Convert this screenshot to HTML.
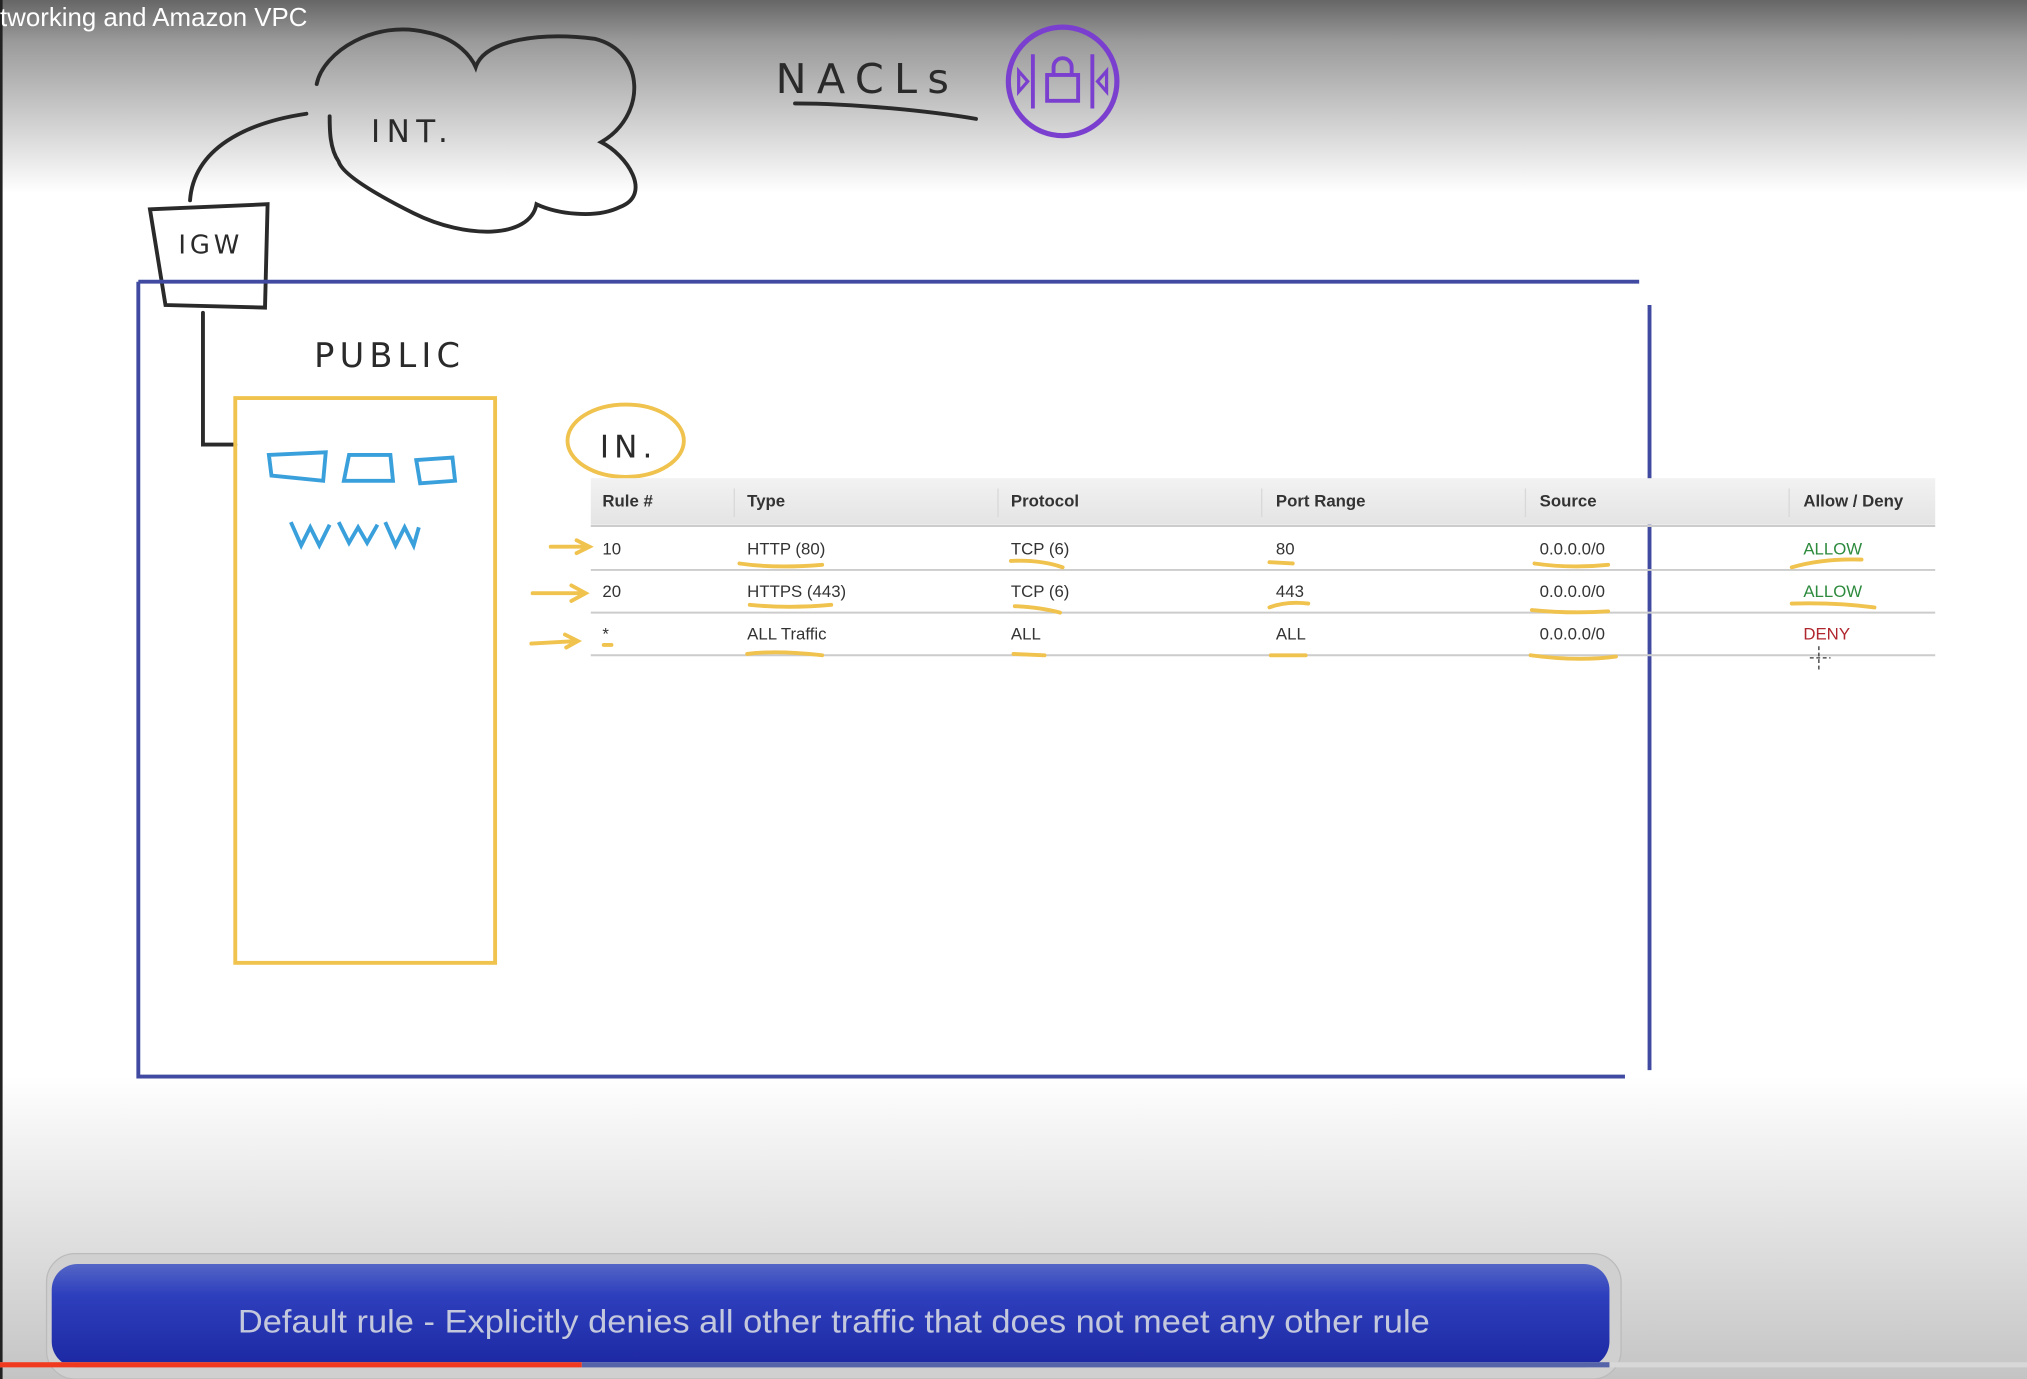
<!DOCTYPE html>
<html><head><meta charset="utf-8"><style>
html,body{margin:0;padding:0;width:2027px;height:1379px;overflow:hidden;background:#fff}
svg{display:block}
</style></head><body>
<svg width="2027" height="1379" viewBox="0 0 1568 1067" preserveAspectRatio="none" xmlns="http://www.w3.org/2000/svg">
<defs>
<linearGradient id="bg" x1="0" y1="0" x2="0" y2="1">
<stop offset="0" stop-color="#666"/>
<stop offset="0.03" stop-color="#9a9a9a"/>
<stop offset="0.14" stop-color="#fff"/>
<stop offset="0.78" stop-color="#fff"/>
<stop offset="1" stop-color="#c4c4c4"/>
</linearGradient>
<linearGradient id="hd" x1="0" y1="0" x2="0" y2="1">
<stop offset="0" stop-color="#f2f2f2"/><stop offset="1" stop-color="#e4e4e4"/>
</linearGradient>
<linearGradient id="cap" x1="0" y1="0" x2="0" y2="1">
<stop offset="0" stop-color="#5466c6"/><stop offset="0.3" stop-color="#2e3fbd"/><stop offset="1" stop-color="#1c28a2"/>
</linearGradient>
</defs>
<rect width="1568" height="1067" fill="url(#bg)"/>
<rect x="0" y="0" width="2" height="1067" fill="#222"/>
<text x="0" y="20" font-family="Liberation Sans, sans-serif" font-size="20" fill="#fff">tworking and Amazon VPC</text>

<g fill="none" stroke="#2a2a2a" stroke-width="3" stroke-linecap="round">
<path d="M245 65 C250 40 290 15 330 25 C355 30 365 45 368 52 C375 30 420 25 460 30 C500 40 500 90 465 110 C485 120 505 150 480 160 C460 170 430 165 415 158 C410 185 360 185 320 165 C290 150 265 135 262 125 C255 115 255 100 255 90"/>
<path d="M237 88 C190 95 150 115 147 155"/>
<path d="M116 162 L207 158 L205 238 L128 236 Z"/>
<path d="M157 242 L157 344 L182 344"/>
<path d="M615 80 C660 80 720 86 755 92"/>
</g>
<text x="287" y="110" font-family="DejaVu Sans, sans-serif" font-size="24" fill="#2a2a2a" letter-spacing="5">INT.</text>
<text x="138" y="196" font-family="DejaVu Sans, sans-serif" font-size="20" fill="#2a2a2a" letter-spacing="3">IGW</text>
<text x="600" y="72" font-family="DejaVu Sans, sans-serif" font-size="32" fill="#2a2a2a" letter-spacing="8">NACLs</text>
<text x="243" y="284" font-family="DejaVu Sans, sans-serif" font-size="26" fill="#2a2a2a" letter-spacing="4">PUBLIC</text>

<g fill="none" stroke="#7b3fd0" stroke-width="4">
<circle cx="822" cy="63" r="42"/>
<path d="M799 42 V84 M845 42 V84" stroke-width="3"/>
<path d="M788 55 L795 63 L788 71 Z M856 55 L849 63 L856 71 Z" stroke-width="2.5"/>
<rect x="810" y="58" width="24" height="20" stroke-width="3"/>
<path d="M815 58 V52 A7 7 0 0 1 829 52 V58" stroke-width="3"/>
</g>

<g fill="none" stroke="#3f4aa0" stroke-width="3">
<path d="M107 218 H1268 M107 218 V833 H1257 M1276 236 V828"/>
</g>
<rect x="182" y="308" width="201" height="437" fill="none" stroke="#f0c24e" stroke-width="3"/>
<g fill="none" stroke="#3aa0dc" stroke-width="3">
<path d="M208 352 L252 350 L250 372 L210 368 Z M270 352 L302 352 L304 372 L266 372 Z M322 356 L350 354 L352 372 L325 374 Z"/>
<path d="M225 404 L233 422 L240 408 L247 422 L255 406 M262 404 L270 420 L277 408 L284 420 L292 406 M298 404 L306 422 L313 408 L320 422 L324 408"/>
</g>
<ellipse cx="484" cy="341" rx="45" ry="28" fill="none" stroke="#f0c24e" stroke-width="3"/>
<text x="464" y="354" font-family="DejaVu Sans, sans-serif" font-size="24" fill="#2a2a2a" letter-spacing="4">IN.</text>

<rect x="457" y="370" width="1040" height="36" fill="url(#hd)"/>
<g stroke="#d8d8d8" stroke-width="1">
<path d="M568 378 V400 M772 378 V400 M976 378 V400 M1180 378 V400 M1384 378 V400"/>
<path d="M457 407 H1497 M457 441 H1497 M457 474 H1497 M457 507 H1497" stroke="#ccc" stroke-width="1.5"/>
</g>
<g font-family="Liberation Sans, sans-serif" font-size="13" fill="#333">
<g font-weight="bold">
<text x="466" y="392">Rule #</text><text x="578" y="392">Type</text><text x="782" y="392">Protocol</text><text x="987" y="392">Port Range</text><text x="1191" y="392">Source</text><text x="1395" y="392">Allow / Deny</text>
</g>
<text x="466" y="429">10</text><text x="578" y="429">HTTP (80)</text><text x="782" y="429">TCP (6)</text><text x="987" y="429">80</text><text x="1191" y="429">0.0.0.0/0</text><text x="1395" y="429" fill="#2e8b3e">ALLOW</text>
<text x="466" y="462">20</text><text x="578" y="462">HTTPS (443)</text><text x="782" y="462">TCP (6)</text><text x="987" y="462">443</text><text x="1191" y="462">0.0.0.0/0</text><text x="1395" y="462" fill="#2e8b3e">ALLOW</text>
<text x="466" y="495">*</text><text x="578" y="495">ALL Traffic</text><text x="782" y="495">ALL</text><text x="987" y="495">ALL</text><text x="1191" y="495">0.0.0.0/0</text><text x="1395" y="495" fill="#b0262e">DENY</text>
</g>
<g fill="none" stroke="#f0c24e" stroke-width="3" stroke-linecap="round">
<path d="M572 436 Q600 440 636 437 M782 434 Q805 433 822 439 M982 435 L1000 436 M1187 436 Q1215 440 1244 437 M1386 439 Q1410 432 1440 433"/>
<path d="M580 468 Q610 471 643 468 M785 469 Q805 470 820 474 M982 470 Q995 465 1012 467 M1185 472 Q1215 475 1244 473 M1386 467 Q1420 466 1450 470"/>
<path d="M578 506 Q600 503 636 507 M784 506 L808 507 M983 507 L1010 507 M1184 507 Q1220 512 1250 508"/>
<path d="M426 423 L455 423 M446 418 L456 423 L446 428"/>
<path d="M412 459 L452 459 M442 453 L453 459 L442 465"/>
<path d="M411 498 L446 496 M437 491 L447 496 L438 501 M467 499 L473 499"/>
</g>
<path d="M1407 500 V518 M1400 509 H1416" stroke="#333" stroke-width="1" stroke-dasharray="3 2"/>

<rect x="36" y="970" width="1218" height="97" rx="22" fill="#d0d0d0" stroke="#bbb"/>
<rect x="40" y="978" width="1205" height="80" rx="20" fill="url(#cap)"/>
<text x="184" y="1031" textLength="922" lengthAdjust="spacingAndGlyphs" font-family="Liberation Sans, sans-serif" font-size="25" fill="#c4c8dc">Default rule - Explicitly denies all other traffic that does not meet any other rule</text>
<rect x="0" y="1054" width="1568" height="4" fill="#d8d8d8"/>
<rect x="450" y="1054" width="795" height="4" fill="#5563a8"/>
<rect x="0" y="1054" width="450" height="4" fill="#f03a20"/>
</svg>
</body></html>
